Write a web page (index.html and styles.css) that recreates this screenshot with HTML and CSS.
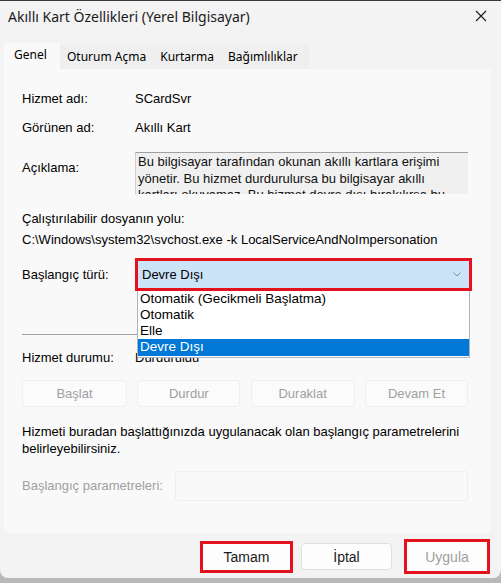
FILE: index.html
```html
<!DOCTYPE html>
<html lang="tr">
<head>
    <meta charset="UTF-8">
    <title>Akıllı Kart Özellikleri (Yerel Bilgisayar)</title>
    <link rel="stylesheet" href="styles.css">
</head>
<body>
    <div class="window">
        <div class="titlebar">
            <span class="title">Akıllı Kart Özellikleri (Yerel Bilgisayar)</span>
            <svg class="close" width="12" height="12" viewBox="0 0 12 12">
                <path d="M1 1 L11 11 M11 1 L1 11" stroke="#1a1a1a" stroke-width="1.1" fill="none"/>
            </svg>
        </div>

        <div class="tabs">
            <div class="tab active">Genel</div>
            <div class="tab-strip">
                <div class="tab">Oturum Açma</div>
                <div class="tab">Kurtarma</div>
                <div class="tab">Bağımlılıklar</div>
            </div>
        </div>

        <div class="panel">
            <div class="row">
                <span class="label">Hizmet adı:</span>
                <span>SCardSvr</span>
            </div>
            <div class="row row-gap">
                <span class="label">Görünen ad:</span>
                <span>Akıllı Kart</span>
            </div>
            <div class="row desc-row">
                <span class="label desc-label">Açıklama:</span>
                <div class="desc-box">
                    <p>Bu bilgisayar tarafından okunan akıllı kartlara erişimi yönetir. Bu hizmet durdurulursa bu bilgisayar akıllı kartları okuyamaz. Bu hizmet devre dışı bırakılırsa bu hizmete açıkça bağımlı olan hizmetler başlatılamaz.</p>
                </div>
            </div>

            <div class="path-title">Çalıştırılabilir dosyanın yolu:</div>
            <div class="path">C:\Windows\system32\svchost.exe -k LocalServiceAndNoImpersonation</div>

            <div class="row combo-row">
                <span class="label">Başlangıç türü:</span>
                <div class="combo-wrap">
                    <div class="combo">
                        <span>Devre Dışı</span>
                        <svg width="8" height="5" viewBox="0 0 8 5">
                            <path d="M0.5 0.5 L4 4 L7.5 0.5" stroke="#8a8a8a" stroke-width="1" fill="none"/>
                        </svg>
                    </div>
                    <ul class="dropdown">
                        <li>Otomatik (Gecikmeli Başlatma)</li>
                        <li>Otomatik</li>
                        <li>Elle</li>
                        <li class="selected">Devre Dışı</li>
                    </ul>
                </div>
            </div>

            <div class="separator"></div>

            <div class="row status-row">
                <span class="label">Hizmet durumu:</span>
                <span>Durduruldu</span>
            </div>

            <div class="service-buttons">
                <button disabled>Başlat</button>
                <button disabled>Durdur</button>
                <button disabled>Duraklat</button>
                <button disabled>Devam Et</button>
            </div>

            <p class="hint">Hizmeti buradan başlattığınızda uygulanacak olan başlangıç parametrelerini belirleyebilirsiniz.</p>

            <div class="params">
                <span class="params-label">Başlangıç parametreleri:</span>
                <div class="params-input"></div>
            </div>
        </div>

        <div class="footer">
            <button class="dlg-btn marked">Tamam</button>
            <button class="dlg-btn">İptal</button>
            <button class="dlg-btn marked" disabled>Uygula</button>
        </div>
    </div>
    <div class="below"></div>
</body>
</html>
```

FILE: styles.css
```css
body {
    margin: 0;
    background: #b9b9b9;
    font-family: 'Liberation Sans', Arial, sans-serif;
    font-size: 13px;
    color: #000;
}
.window {
    height: 578px;
    box-sizing: border-box;
    border-top: 1px solid #3a3a3a;
    background: #f3f3f3;
    border-radius: 0 0 8px 8px;
    display: flex;
    flex-direction: column;
}
.titlebar {
    height: 30px;
    padding: 0 14px 0 8px;
    display: flex;
    align-items: center;
    justify-content: space-between;
}
.title {
    font-family: 'Noto Sans', sans-serif;
    font-size: 14px;
    color: #1a1a1a;
}

/* tabs */
.tabs {
    margin-top: 12px;
    padding-left: 4px;
    display: flex;
    align-items: flex-end;
}
.tab {
    font-family: 'Noto Sans', sans-serif;
    font-size: 12px;
    height: 24px;
    line-height: 24px;
    padding: 0 7px;
}
.tab.active {
    background: #f9f9f9;
    height: 26px;
    line-height: 24px;
    padding: 0 10px;
    width: 36px;
}
.tab-strip {
    display: flex;
    background: #efefef;
    padding-right: 4px;
}

/* main panel */
.panel {
    margin: 0 10px 0 4px;
    background: #f9f9f9;
    border-radius: 0 0 6px 6px;
    height: 464px;
    box-sizing: border-box;
    padding: 22px 23px 0 18px;
    line-height: 16px;
}
.row {
    display: flex;
}
.label {
    width: 113px;
    flex-shrink: 0;
}
.row-gap {
    margin-top: 13px;
}
.desc-row {
    margin-top: 16px;
}
.desc-label {
    padding-top: 8px;
}
.desc-box {
    width: 334px;
    height: 42px;
    box-sizing: border-box;
    overflow: hidden;
    background: #f0f0f0;
    border-top: 1px solid #a0a0a0;
    border-left: 1px solid #d0d0d0;
    padding: 1px 4px 0 2px;
}
.desc-box p {
    margin: 0;
    line-height: 16.5px;
    color: #111;
}
.path-title {
    margin-top: 17px;
}
.path {
    margin-top: 5px;
}

/* start type combo */
.combo-row {
    margin-top: 10px;
    align-items: center;
}
.combo-wrap {
    position: relative;
}
.combo {
    width: 337px;
    height: 33px;
    box-sizing: border-box;
    border: 3px solid #e3121c;
    background: #cce4f7;
    display: flex;
    align-items: center;
    justify-content: space-between;
    padding: 0 8px 0 4px;
}
.dropdown {
    position: absolute;
    top: 33px;
    left: 2px;
    width: 333px;
    box-sizing: border-box;
    margin: 0;
    padding: 0 0 1px;
    list-style: none;
    background: #fff;
    border: 1px solid #a8b6c4;
    border-top: none;
    font-size: 13.5px;
}
.dropdown li {
    height: 16px;
    line-height: 16px;
    padding-left: 2px;
}
.dropdown li.selected {
    background: #0078d7;
    color: #fff;
    height: 17px;
}
.separator {
    margin-top: 43px;
    height: 1px;
    background: #a0a0a0;
    width: 200px;
}
.status-row {
    margin-top: 15px;
}

/* service control buttons */
.service-buttons {
    margin-top: 14px;
    display: grid;
    grid-template-columns: 105px 103px 104px 103px;
    justify-content: space-between;
}
.service-buttons button {
    height: 27px;
    font: inherit;
    color: #a0a0a0;
    background: #fbfbfb;
    border: 1px solid #efefef;
    border-radius: 3px;
}
.hint {
    margin: 16px 0 0;
    line-height: 17px;
}
.params {
    margin-top: 14px;
    display: flex;
    align-items: center;
}
.params-label {
    width: 153px;
    color: #a0a0a0;
}
.params-input {
    flex: 1;
    height: 28px;
    border: 1px solid #efefef;
    border-radius: 3px;
}

/* dialog buttons */
.footer {
    display: flex;
    justify-content: flex-end;
    align-items: center;
    gap: 8px;
    padding: 6px 11px 0 0;
}
.dlg-btn {
    font: inherit;
    font-size: 14px;
    width: 91px;
    height: 27px;
    background: #fdfdfd;
    border: 1px solid #e0e0e0;
    border-radius: 4px;
    color: #1a1a1a;
}
.dlg-btn.marked {
    width: 93px;
    height: 32px;
    border: 3px solid #e3121c;
    border-radius: 0;
}
.dlg-btn:disabled {
    color: #a0a0a0;
    width: 86px;
    height: 35px;
    margin-left: 4px;
}
.below {
    height: 5px;
}
```
